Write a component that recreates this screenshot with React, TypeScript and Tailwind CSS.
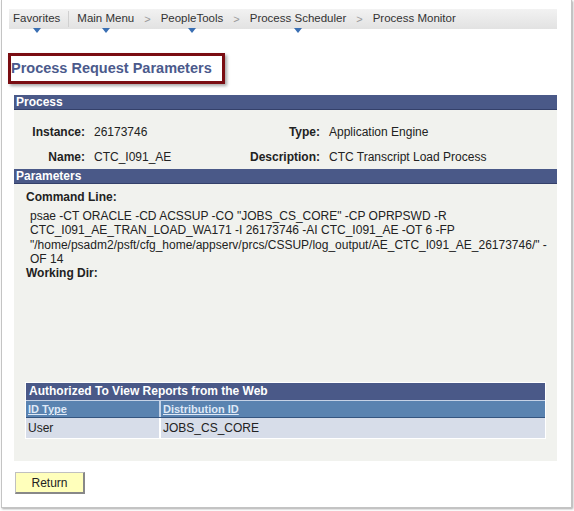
import React from "react";

const crumbs = [
  { label: "Favorites", menu: true },
  { label: "Main Menu", menu: true },
  { label: "PeopleTools", menu: true },
  { label: "Process Scheduler", menu: true },
  { label: "Process Monitor", menu: false },
];

const cmdLines = [
  'psae -CT ORACLE -CD ACSSUP -CO "JOBS_CS_CORE" -CP OPRPSWD -R',
  "CTC_I091_AE_TRAN_LOAD_WA171 -I 26173746 -AI CTC_I091_AE -OT 6 -FP",
  '"/home/psadm2/psft/cfg_home/appserv/prcs/CSSUP/log_output/AE_CTC_I091_AE_26173746/" -',
  "OF 14",
];

function Caret() {
  return (
    <svg width="8" height="5" viewBox="0 0 8 5" className="absolute left-1/2 -translate-x-1/2 -bottom-[5px]">
      <path d="M0 0 L8 0 L4 5 Z" fill="#3a6fb3" />
    </svg>
  );
}

function Breadcrumb() {
  return (
    <div className="flex items-center h-[20px] bg-gradient-to-b from-[#f2f2f2] to-[#e2e2e2] text-[11.5px] text-[#333]">
      {crumbs.map((c, i) => (
        <React.Fragment key={c.label}>
          {i === 1 && <span className="ml-[8px] mr-[8px] w-px h-[16px] bg-[#d0d0d0]" />}
          {i > 1 && <span className="mx-[10px] text-[#999] text-[11px]">&gt;</span>}
          <span className={`relative ${i === 0 ? "ml-[4px]" : ""}`}>
            {c.label}
            {c.menu && <Caret />}
          </span>
        </React.Fragment>
      ))}
    </div>
  );
}

function Bar({ children }: { children: React.ReactNode }) {
  return (
    <div className="h-[15px] bg-[#4a5988] border-b border-[#34406a] text-white font-bold text-[12px] leading-[14px] pl-[2px]">
      {children}
    </div>
  );
}

export default function App() {
  return (
    <div className="w-[574px] h-[511px] bg-white font-['Liberation_Sans',Arial,sans-serif]">
      <div className="ml-[1px] w-[571px] h-[508px] border-l border-r border-b border-[#c4c4c4] shadow-[1px_1px_2px_rgba(0,0,0,0.35)] bg-white pt-[9px]">
        <div className="ml-[7px] w-[548px]">
          <Breadcrumb />
        </div>

        {/* Page title */}
        <div className="ml-[6px] mt-[24px] w-[217px] h-[31px] border-[3px] border-[#7a0d12] shadow-[2px_2px_3px_rgba(0,0,0,0.35)] flex items-center">
          <span className="text-[#4b5a8c] font-bold text-[14.5px]">Process Request Parameters</span>
        </div>

        <div className="ml-[12px] mt-[11px] w-[543px] bg-[#f1f2ee] text-[12px] text-[#222]">
          <Bar>Process</Bar>
          <div className="pt-[9px]">
            <div className="flex h-[25px] items-center">
              <span className="w-[71px] text-right font-bold">Instance:</span>
              <span className="ml-[9px] w-[148px]">26173746</span>
              <span className="w-[78px] text-right font-bold">Type:</span>
              <span className="ml-[9px]">Application Engine</span>
            </div>
            <div className="flex h-[25px] items-center">
              <span className="w-[71px] text-right font-bold">Name:</span>
              <span className="ml-[9px] w-[148px]">CTC_I091_AE</span>
              <span className="w-[78px] text-right font-bold">Description:</span>
              <span className="ml-[9px]">CTC Transcript Load Process</span>
            </div>
          </div>
          <Bar>Parameters</Bar>
          <div className="pl-[12px] pt-[6px]">
            <div className="font-bold leading-[14px]">Command Line:</div>
            <div className="pl-[4px] mt-[5px] leading-[14.3px]">
              {cmdLines.map((l) => (
                <div key={l} className="whitespace-pre">{l}</div>
              ))}
            </div>
            <div className="font-bold leading-[14.3px]">Working Dir:</div>
          </div>

          <div className="ml-[11px] mt-[102px] w-[521px] border border-[#fff]">
            <div className="h-[17px] bg-[#4a5988] text-white font-bold text-[12px] leading-[17px] pl-[3px]">
              Authorized To View Reports from the Web
            </div>
            <div className="flex h-[18px] bg-[#5a83b0] border-t border-[#c6d3e6] border-b border-b-[#35557f] text-[#dfe9f7] font-bold underline text-[11px] leading-[16px]">
              <span className="w-[135px] pl-[2px] border-r-2 border-[#c6d3e6]">ID Type</span>
              <span className="pl-[2px]">Distribution ID</span>
            </div>
            <div className="flex h-[20px] bg-[#d7dde9] leading-[20px] text-[#222]">
              <span className="w-[135px] pl-[2px] border-r-2 border-white">User</span>
              <span className="pl-[2px]">JOBS_CS_CORE</span>
            </div>
          </div>
          <div className="h-[22px]" />
        </div>

        <button className="ml-[13px] mt-[11px] w-[70px] h-[22px] bg-[#ffffbb] border border-[#c0c0c0] border-r-[#888] border-b-[#888] border-r-2 border-b-2 text-[12px] text-[#222]">
          Return
        </button>
      </div>
    </div>
  );
}
